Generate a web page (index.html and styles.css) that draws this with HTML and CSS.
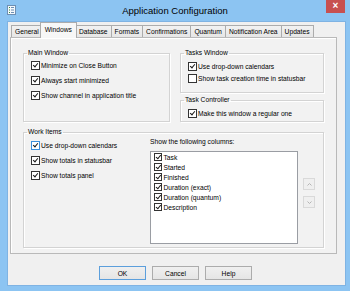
FILE: index.html
```html
<!DOCTYPE html>
<html lang="en">
<head>
    <meta charset="UTF-8">
    <title>Application Configuration</title>
    <link rel="stylesheet" href="styles.css">
</head>
<body>
    <div class="window">
        <div class="titlebar">
            <div class="title-left">
                <svg class="app-icon" width="9" height="10" viewBox="0 0 9 10">
                    <rect x="0.5" y="0.5" width="8" height="9" fill="#f4f8fc" stroke="#6d8fb3"/>
                    <rect x="2" y="2" width="1" height="1" fill="#3a8a3a"/>
                    <rect x="4" y="2" width="3" height="1" fill="#6d8fb3"/>
                    <rect x="2" y="4.5" width="1" height="1" fill="#3a8a3a"/>
                    <rect x="4" y="4.5" width="3" height="1" fill="#6d8fb3"/>
                    <rect x="2" y="7" width="1" height="1" fill="#3a8a3a"/>
                    <rect x="4" y="7" width="3" height="1" fill="#6d8fb3"/>
                </svg>
            </div>
            <div class="title">Application Configuration</div>
            <div class="title-right">
                <div class="close">&#215;</div>
            </div>
        </div>

        <div class="frame">
            <div class="client">
                <!-- Abas -->
                <div class="tabs">
                    <div class="tab">General</div>
                    <div class="tab active">Windows</div>
                    <div class="tab">Database</div>
                    <div class="tab">Formats</div>
                    <div class="tab">Confirmations</div>
                    <div class="tab">Quantum</div>
                    <div class="tab">Notification Area</div>
                    <div class="tab">Updates</div>
                </div>

                <div class="panel">
                    <div class="top-row">
                        <fieldset class="group main-group">
                            <legend>Main Window</legend>
                            <div class="rows rows-wide">
                                <div class="check-row"><span class="cb on"></span>Minimize on Close Button</div>
                                <div class="check-row"><span class="cb on"></span>Always start minimized</div>
                                <div class="check-row"><span class="cb on"></span>Show channel in application title</div>
                            </div>
                        </fieldset>

                        <div class="right-col">
                            <fieldset class="group tasks-group">
                                <legend>Tasks Window</legend>
                                <div class="rows rows-tight">
                                    <div class="check-row"><span class="cb on"></span>Use drop-down calendars</div>
                                    <div class="check-row"><span class="cb"></span>Show task creation time in statusbar</div>
                                </div>
                            </fieldset>
                            <fieldset class="group controller-group">
                                <legend>Task Controller</legend>
                                <div class="rows rows-tight">
                                    <div class="check-row"><span class="cb on"></span>Make this window a regular one</div>
                                </div>
                            </fieldset>
                        </div>
                    </div>

                    <fieldset class="group work-group">
                        <legend>Work Items</legend>
                        <div class="work-body">
                            <div class="work-left">
                                <div class="check-row"><span class="cb on focus"></span>Use drop-down calendars</div>
                                <div class="check-row"><span class="cb on"></span>Show totals in statusbar</div>
                                <div class="check-row"><span class="cb on"></span>Show totals panel</div>
                            </div>
                            <div class="work-right">
                                <div class="columns-label">Show the following columns:</div>
                                <div class="list-wrap">
                                    <div class="listbox">
                                        <div class="list-item"><span class="cb small on"></span>Task</div>
                                        <div class="list-item"><span class="cb small on"></span>Started</div>
                                        <div class="list-item"><span class="cb small on"></span>Finished</div>
                                        <div class="list-item"><span class="cb small on"></span>Duration (exact)</div>
                                        <div class="list-item"><span class="cb small on"></span>Duration (quantum)</div>
                                        <div class="list-item"><span class="cb small on"></span>Description</div>
                                    </div>
                                    <div class="updown">
                                        <div class="arrow-btn">
                                            <svg width="5" height="3" viewBox="0 0 5 3"><path d="M0.5 2.5 L2.5 0.5 L4.5 2.5" fill="none" stroke="#b4b4b4"/></svg>
                                        </div>
                                        <div class="arrow-btn">
                                            <svg width="5" height="3" viewBox="0 0 5 3"><path d="M0.5 0.5 L2.5 2.5 L4.5 0.5" fill="none" stroke="#b4b4b4"/></svg>
                                        </div>
                                    </div>
                                </div>
                            </div>
                        </div>
                    </fieldset>
                </div>

                <div class="buttons">
                    <button class="button default">OK</button>
                    <button class="button">Cancel</button>
                    <button class="button">Help</button>
                </div>
            </div>
        </div>
    </div>
</body>
</html>
```

FILE: styles.css
```css
/* Geral */
body {
    margin: 0;
    background: #ffffff;
    font-family: "Liberation Sans", Arial, sans-serif;
    font-size: 6.7px;
    color: #000;
}
.window {
    width: 350px;
    height: 291px;
    background: #8cc4f2;
    display: flex;
    flex-direction: column;
}

/* Barra de titulo */
.titlebar {
    height: 22px;
    display: grid;
    grid-template-columns: 1fr auto 1fr;
}
.app-icon {
    display: block;
    margin: 5px 0 0 7px;
}
.title {
    font-size: 9.5px;
    line-height: 21px;
    color: #000;
}
.title-right {
    display: flex;
    justify-content: flex-end;
}
.close {
    width: 19px;
    height: 13px;
    margin-right: 5px;
    background: #c75050;
    color: #fff;
    font-size: 10px;
    font-weight: bold;
    line-height: 12px;
    text-align: center;
}

/* Area cliente */
.frame {
    flex: 1;
    padding: 0 5px 6px 8px;
    display: flex;
}
.client {
    flex: 1;
    background: #f0f0f0;
    padding-top: 1px;
    box-shadow: 0 0 0 1px #7fb3e3;
}

/* Abas */
.tabs {
    display: flex;
    align-items: flex-end;
    height: 14px;
    padding-left: 3px;
    position: relative;
    z-index: 1;
}
.tab {
    height: 12px;
    line-height: 11px;
    padding: 0 3px;
    border: 1px solid #acacac;
    border-bottom: none;
    box-sizing: border-box;
    background: linear-gradient(#f2f2f2, #e6e6e6);
    margin-right: -1px;
    white-space: nowrap;
}
.tab.active {
    height: 16px;
    line-height: 14px;
    margin: 0 -2px -1px -2px;
    padding: 0 4px;
    background: #f7f7f7;
    position: relative;
    z-index: 2;
}
.panel {
    margin-left: 2px;
    width: 327px;
    height: 217px;
    box-sizing: border-box;
    border: 1px solid #b9b9b9;
    background: #f2f2f2;
    box-shadow: inset 1px 1px #ffffff;
    padding: 11px 12px 0 12px;
    display: flex;
    flex-direction: column;
}

/* Grupos */
.group {
    margin: 0;
    padding: 0 0 0 7px;
    border: 1px solid #d3d3d3;
    box-shadow: inset 1px 1px #ffffff, 1px 1px #ffffff;
    box-sizing: border-box;
    min-width: 0;
}
.group legend {
    padding: 0 1px;
    margin-left: -4px;
    line-height: 8px;
}
.top-row {
    display: flex;
    gap: 10px;
    height: 73px;
}
.main-group {
    width: 147px;
    height: 73px;
}
.right-col {
    width: 144px;
    display: flex;
    flex-direction: column;
    gap: 3px;
}
.tasks-group {
    height: 44px;
}
.controller-group {
    height: 26px;
}
.rows-wide {
    padding-top: 0.5px;
}
.rows-wide .check-row {
    height: 15px;
}
.rows-tight {
    padding-top: 3px;
}
.rows-tight .check-row {
    height: 12px;
}
.check-row {
    display: flex;
    align-items: center;
    gap: 1px;
    height: 15px;
    white-space: nowrap;
}

/* Caixas de selecao */
.cb {
    width: 9px;
    height: 9px;
    box-sizing: border-box;
    border: 1px solid #333333;
    background: #ffffff;
    flex-shrink: 0;
    position: relative;
}
.cb.on::after {
    content: "";
    position: absolute;
    left: 2px;
    top: 0px;
    width: 2px;
    height: 4px;
    border: solid #1a1a1a;
    border-width: 0 1.5px 1.5px 0;
    transform: rotate(40deg);
}
.cb.focus {
    border-color: #3c8fdc;
}
.cb.small {
    width: 8px;
    height: 8px;
}
.cb.small.on::after {
    left: 1.7px;
    top: -0.3px;
    height: 3.6px;
}

/* Itens de trabalho */
.work-group {
    margin-top: 6px;
    height: 120px;
}
.work-body {
    display: flex;
}
.work-left {
    width: 119px;
    padding-top: 1.5px;
}
.columns-label {
    margin-top: 2px;
    line-height: 8px;
}
.list-wrap {
    display: flex;
    gap: 5px;
    margin-top: 5px;
}
.listbox {
    width: 148px;
    height: 93px;
    box-sizing: border-box;
    border: 1px solid #9a9da3;
    background: #ffffff;
}
.list-item {
    height: 10px;
    display: flex;
    align-items: center;
    gap: 1.5px;
    padding-left: 3px;
}
.updown {
    display: flex;
    flex-direction: column;
    gap: 6px;
    padding-top: 27px;
}
.arrow-btn {
    width: 12px;
    height: 12px;
    box-sizing: border-box;
    border: 1px solid #d9d9d9;
    background: #efefef;
    display: flex;
    align-items: center;
    justify-content: center;
}

/* Botoes */
.buttons {
    display: flex;
    justify-content: center;
    gap: 6px;
    margin-top: 12px;
    padding-right: 2px;
}
.button {
    width: 47px;
    height: 14px;
    padding: 0;
    font-family: inherit;
    font-size: 6.7px;
    color: #000;
    border: 1px solid #acacac;
    background: linear-gradient(#f0f0f0, #e5e5e5);
}
.button.default {
    border-color: #5c9fdc;
}
```
